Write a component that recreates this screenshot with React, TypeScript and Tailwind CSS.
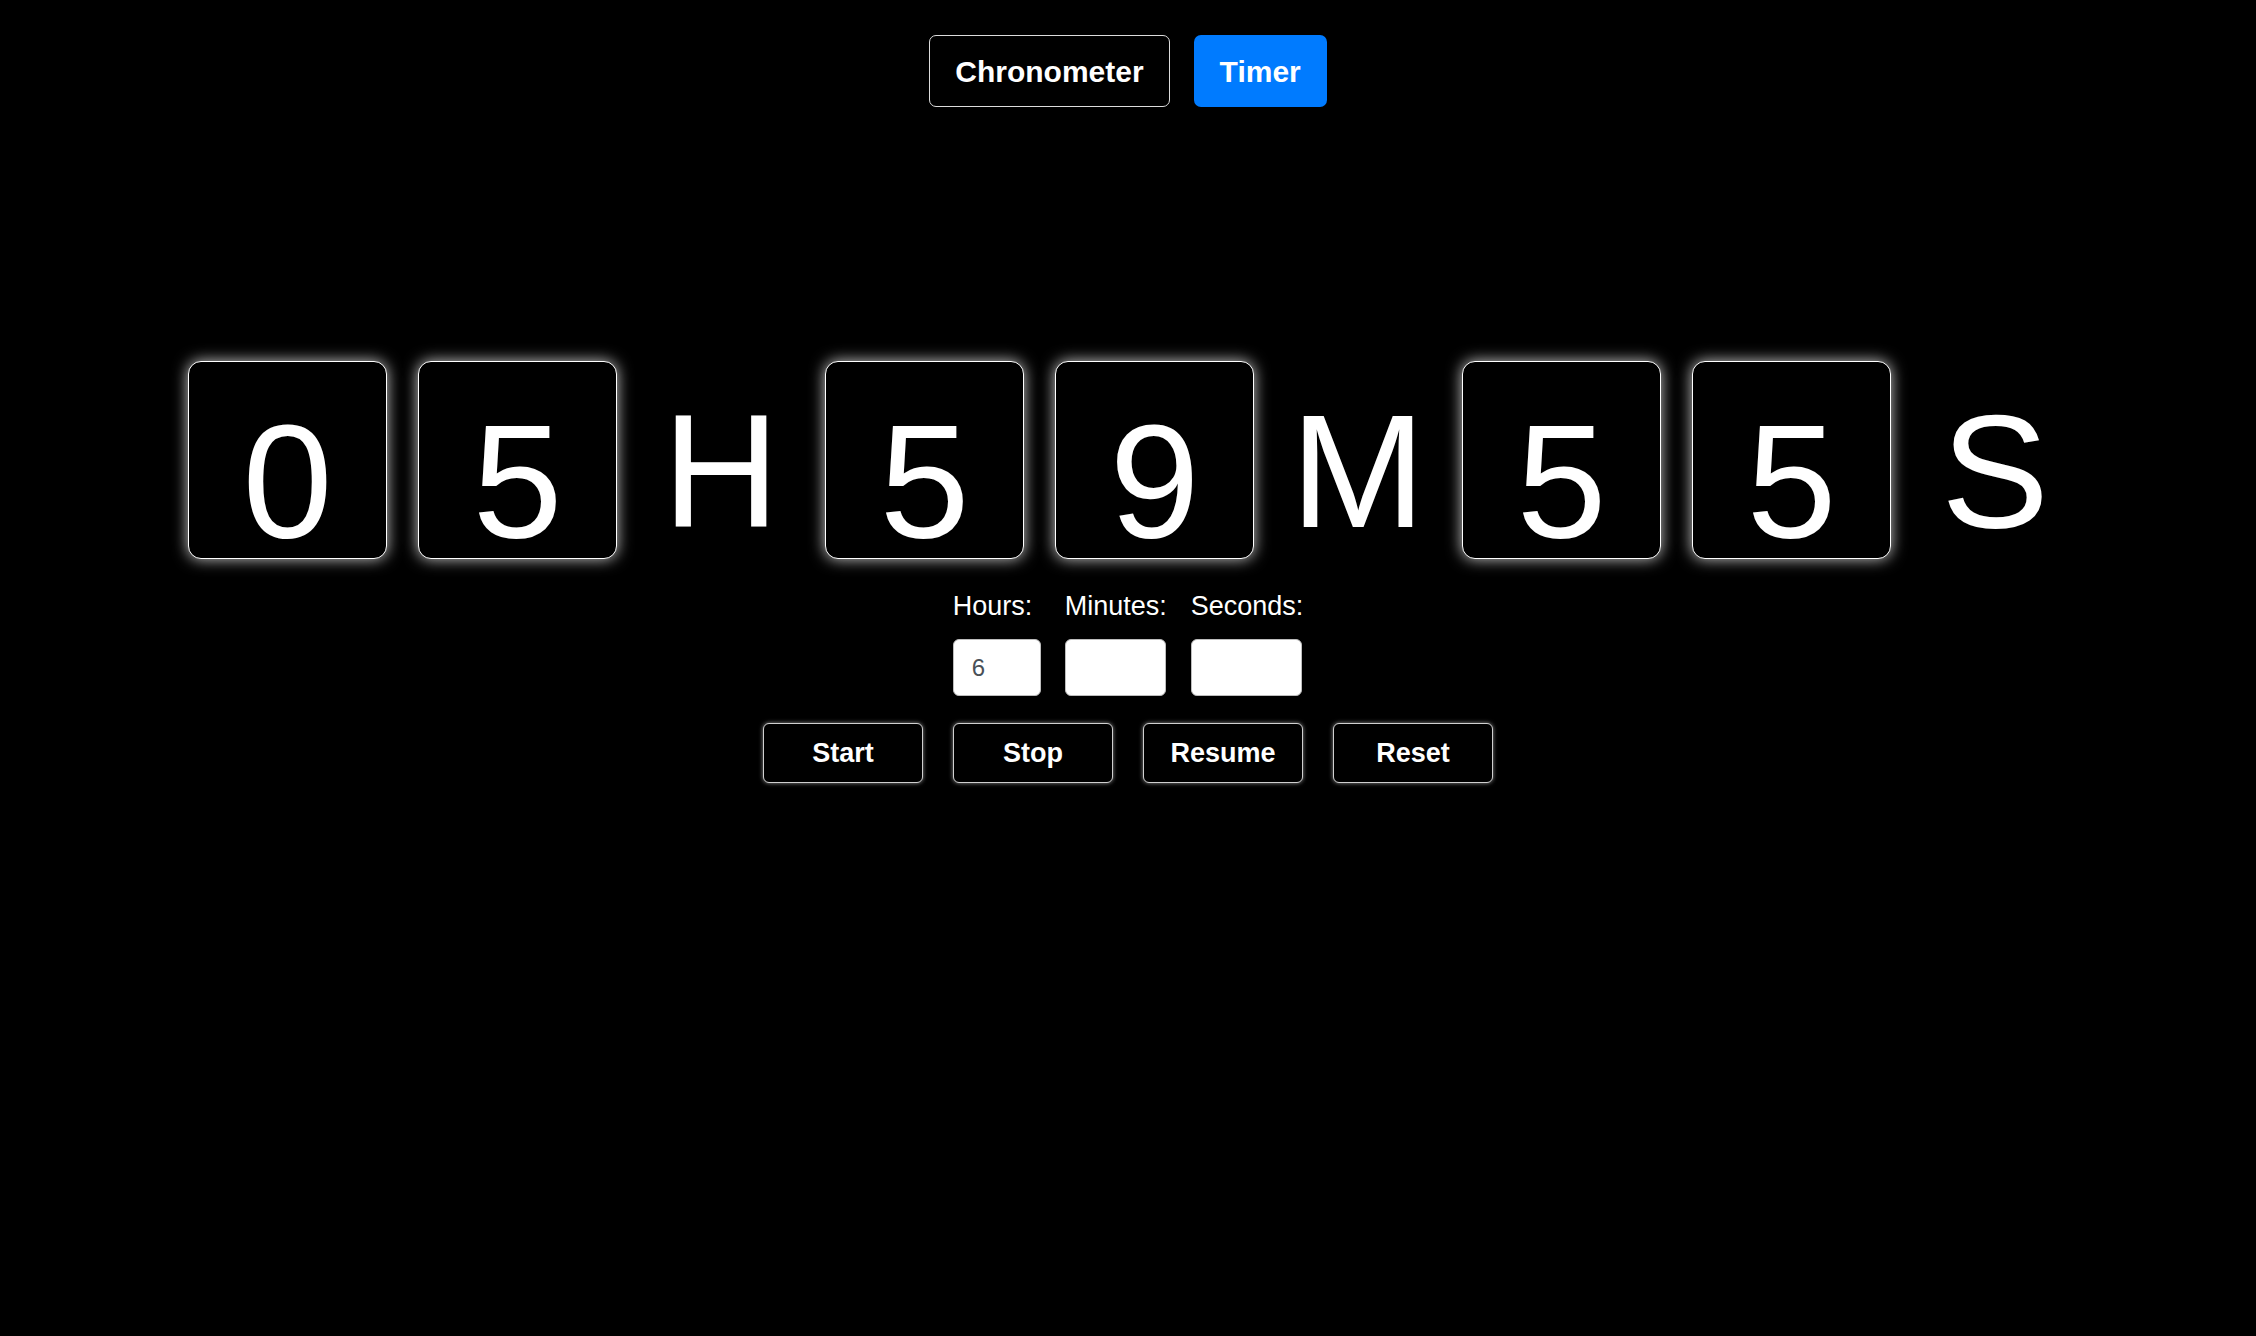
import React, { useState } from 'react';

type Unit = { digits: string; letter: string };

const DigitBox: React.FC<{ value: string }> = ({ value }) => (
  <div className="flex h-[198px] w-[199px] shrink-0 justify-center rounded-[13px] border border-white bg-black pt-[38px] shadow-[0_0_15px_rgba(255,255,255,0.8)]">
    <span className="block text-[162px] leading-none text-white">{value}</span>
  </div>
);

const App: React.FC = () => {
  const [mode, setMode] = useState<'chrono' | 'timer'>('timer');
  const [hours, setHours] = useState('6');
  const [minutes, setMinutes] = useState('');
  const [seconds, setSeconds] = useState('');

  const units: Unit[] = [
    { digits: '05', letter: 'H' },
    { digits: '59', letter: 'M' },
    { digits: '55', letter: 'S' },
  ];

  const fields = [
    { label: 'Hours:', value: hours, set: setHours, width: 'w-[88px]' },
    { label: 'Minutes:', value: minutes, set: setMinutes, width: 'w-[101px]' },
    { label: 'Seconds:', value: seconds, set: setSeconds, width: 'w-[111px]' },
  ];

  return (
    <div
      className="flex min-h-screen flex-col items-center bg-black pt-[35px] text-white"
      style={{ fontFamily: '"Liberation Sans", Arial, sans-serif' }}
    >
      {/* mode switch */}
      <div className="flex gap-[24px]">
        <button
          onClick={() => setMode('chrono')}
          className={`h-[72px] rounded-[7px] px-[25px] text-[30px] font-bold text-white ${
            mode === 'chrono' ? 'bg-[#007bff]' : 'border-[1.5px] border-[#dcdcdc] bg-black'
          }`}
        >
          Chronometer
        </button>
        <button
          onClick={() => setMode('timer')}
          className={`h-[72px] rounded-[7px] px-[26px] text-[30px] font-bold text-white ${
            mode === 'timer' ? 'bg-[#007bff]' : 'border-[1.5px] border-[#dcdcdc] bg-black'
          }`}
        >
          Timer
        </button>
      </div>

      {/* clock */}
      <div className="mt-[254px] flex items-start gap-[31px]">
        {units.map((u) => (
          <React.Fragment key={u.letter}>
            <DigitBox value={u.digits[0]} />
            <DigitBox value={u.digits[1]} />
            <span className="block w-[146px] shrink-0 pt-[29px] text-center text-[162px] leading-none text-white">
              {u.letter}
            </span>
          </React.Fragment>
        ))}
      </div>

      {/* inputs */}
      <div className="mt-[32px] flex gap-[24px]">
        {fields.map((f) => (
          <div key={f.label} className="flex flex-col">
            <label className="mb-[17px] text-[27px] leading-[31px] text-white">{f.label}</label>
            <input
              type="number"
              value={f.value}
              onChange={(e) => f.set(e.target.value)}
              className={`${f.width} h-[57px] rounded-[6px] border border-[#bdbdbd] bg-white pl-[18px] text-[24px] text-[#495057] outline-none [appearance:textfield] [&::-webkit-inner-spin-button]:appearance-none [&::-webkit-outer-spin-button]:appearance-none`}
            />
          </div>
        ))}
      </div>

      {/* controls */}
      <div className="mt-[27px] flex gap-[30px]">
        {['Start', 'Stop', 'Resume', 'Reset'].map((b) => (
          <button
            key={b}
            className="h-[60px] w-[160px] rounded-[6px] border-[1.5px] border-[#d0d0d0] bg-black text-[27px] font-bold text-white shadow-[0_0_4px_rgba(255,255,255,0.55)]"
          >
            {b}
          </button>
        ))}
      </div>
    </div>
  );
};

export default App;
